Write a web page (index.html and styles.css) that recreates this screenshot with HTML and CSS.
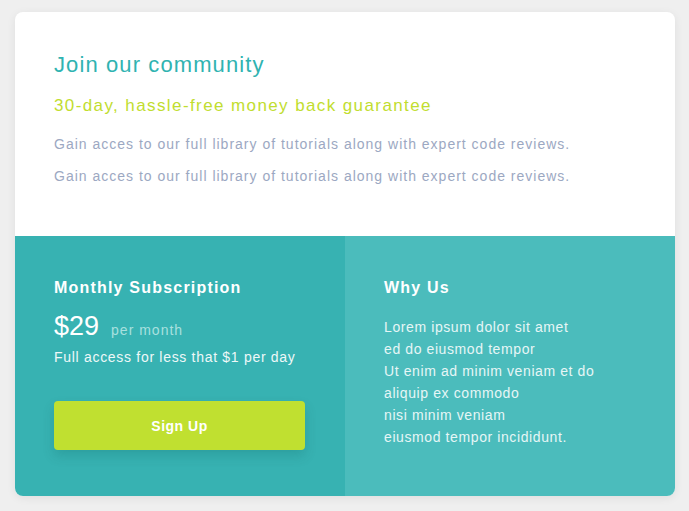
FILE: index.html
```html
<!DOCTYPE html>
<html lang="en">
<head>
<meta charset="utf-8">
<title>Join our community</title>
<link rel="stylesheet" href="styles.css">
</head>
<body>
<main class="card">
  <section class="top">
    <h1 class="title">Join our community</h1>
    <h2 class="subtitle">30-day, hassle-free money back guarantee</h2>
    <p class="desc">Gain acces to our full library of tutorials along with expert code reviews.</p>
    <p class="desc">Gain acces to our full library of tutorials along with expert code reviews.</p>
  </section>
  <div class="bottom">
    <section class="sub">
      <h3 class="heading">Monthly Subscription</h3>
      <div class="price"><span class="amount">$29</span><span class="per">per month</span></div>
      <p class="note">Full access for less that $1 per day</p>
      <button class="btn">Sign Up</button>
    </section>
    <section class="why">
      <h3 class="heading">Why Us</h3>
      <ul class="list">
        <li>Lorem ipsum dolor sit amet</li>
        <li>ed do eiusmod tempor</li>
        <li>Ut enim ad minim veniam et do</li>
        <li>aliquip ex commodo</li>
        <li>nisi minim veniam</li>
        <li>eiusmod tempor incididunt.</li>
      </ul>
    </section>
  </div>
</main>
</body>
</html>
```

FILE: styles.css
```css
* { box-sizing: border-box; }
html, body { margin: 0; padding: 0; }
body {
  background: #efefef;
  font-family: "Liberation Sans", Arial, sans-serif;
  padding: 12px 14px 15px 15px;
}
.card {
  width: 660px;
  height: 484px;
  background: #fff;
  border-radius: 8px;
  overflow: hidden;
  box-shadow: 0 2px 10px rgba(0,0,0,0.07);
  display: flex;
  flex-direction: column;
}
.top {
  height: 224px;
  padding: 39px 39px 0;
}
.title {
  margin: 0;
  font-size: 22px;
  font-weight: 400;
  letter-spacing: 1.1px;
  color: #30b3b1;
  line-height: 28px;
}
.subtitle {
  margin: 16px 0 0;
  font-size: 17px;
  font-weight: 400;
  letter-spacing: 1.4px;
  color: #c1dd2f;
  line-height: 22px;
}
.desc {
  margin: 16px 0 0;
  font-size: 14px;
  letter-spacing: 1px;
  color: #9ca8c2;
  line-height: 22px;
}
.desc + .desc { margin-top: 10px; }
.bottom {
  flex: 1;
  display: flex;
}
.sub, .why {
  flex: 1;
  padding: 41px 39px 0;
  color: #fff;
}
.sub { background: #37b2b2; }
.why { background: #4bbcbc; }
.heading {
  margin: 0;
  font-size: 16px;
  font-weight: 700;
  letter-spacing: 1.2px;
  line-height: 22px;
}
.price {
  display: flex;
  align-items: baseline;
  margin-top: 11px;
}
.amount {
  font-size: 27px;
  line-height: 32px;
}
.per {
  margin-left: 12px;
  font-size: 14px;
  letter-spacing: 1px;
  color: #a8e0df;
}
.note {
  margin: 5px 0 0;
  font-size: 14px;
  letter-spacing: 0.7px;
  line-height: 20px;
  color: #eef8f8;
}
.btn {
  display: block;
  margin-top: 34px;
  width: 251px;
  height: 49px;
  border: 0;
  border-radius: 4px;
  background: #c0e030;
  color: #fff;
  font-family: inherit;
  font-size: 14px;
  font-weight: 700;
  letter-spacing: 0.5px;
  box-shadow: 0 6px 12px rgba(0,80,80,0.18);
}
.list {
  list-style: none;
  margin: 17px 0 0;
  padding: 0;
  font-size: 14px;
  letter-spacing: 0.6px;
  line-height: 22px;
  color: #e6f6f6;
}
```
